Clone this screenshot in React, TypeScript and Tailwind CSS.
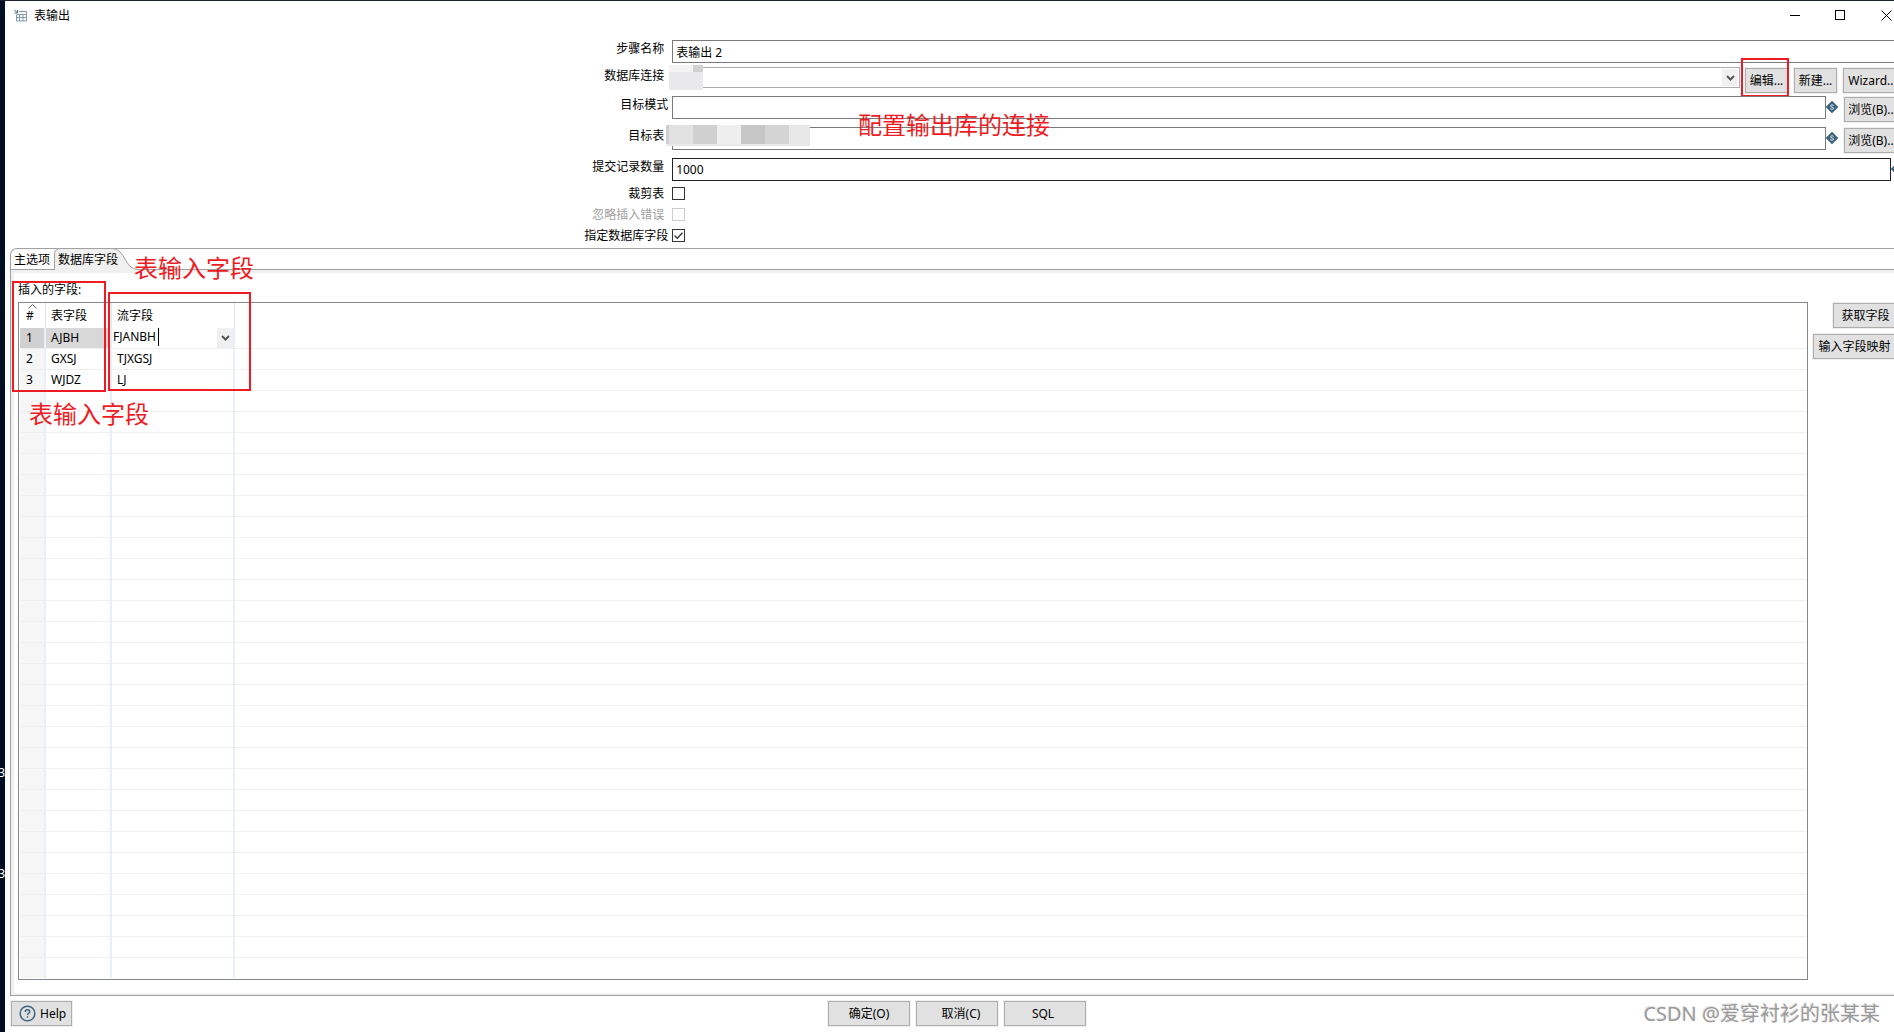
import type { ReactNode } from "react";

interface FieldRow {
  table: string;
  stream: string;
}

const fields: FieldRow[] = [
  { table: "AJBH", stream: "FJANBH" },
  { table: "GXSJ", stream: "TJXGSJ" },
  { table: "WJDZ", stream: "LJ" }
];

const EMPTY_ROWS = 28;

const pushButton =
  "h-[25px] shrink-0 whitespace-nowrap border border-[#adadad] bg-[#e1e1e1] text-center leading-[23px] outline outline-1 outline-[#f0f0f0]";
const textInput = "h-[23px] min-w-0 flex-1 border border-[#7a7a7a] bg-white px-[3px] outline-none";

export default function App() {
  return (
    <div className="relative flex min-h-screen w-full overflow-hidden border-t border-[#1b2230] bg-white font-['Noto_Sans','Noto_Sans_CJK_SC',sans-serif] text-xs text-black">
      <DesktopEdge />
      <main className="flex min-w-0 flex-1 flex-col">
        <TitleBar />
        <StepForm />
        <TabFolder />
        <Footer />
      </main>

      <Note className="left-[858px] top-[106px]">配置输出库的连接</Note>
      <Note className="left-[134px] top-[249px]">表输入字段</Note>
      <Note className="left-[29px] top-[395px]">表输入字段</Note>
      <div className="pointer-events-none absolute left-3 top-[280px] h-[111px] w-[94px] border-2 border-[#ed1c24]" />
      <div className="pointer-events-none absolute left-[108px] top-[291px] h-[99px] w-[143px] border-2 border-[#ed1c24]" />
      <div className="pointer-events-none absolute bottom-[3px] right-[14px] whitespace-nowrap text-xl leading-[30px] text-[#9a9a9a] [text-shadow:-1px_-1px_0_#e4e4e4]">
        CSDN @爱穿衬衫的张某某
      </div>
    </div>
  );
}

function DesktopEdge() {
  return (
    <div className="relative w-[5px] shrink-0 overflow-hidden bg-[#000f24] text-white">
      <span className="absolute right-0 top-[764px] leading-4">3</span>
      <span className="absolute right-0 top-[865px] leading-4">3</span>
    </div>
  );
}

function Note({ className, children }: { className: string; children: ReactNode }) {
  return (
    <div
      className={`pointer-events-none absolute whitespace-nowrap text-2xl leading-9 text-[#ed1c24] ${className}`}
    >
      {children}
    </div>
  );
}

function TitleBar() {
  return (
    <header className="flex h-[29px] items-center pl-[9px]">
      <svg width="13" height="13" viewBox="0 0 13 13" fill="none" stroke="#7f9bb0" className="mr-[7px]">
        <path d="M5 2.5h7.500v9.500h-10v-6M2.500 5.500h10M2.500 8.500h10M5.500 5v7M9 5v7" />
        <path d="M0 .5l3 3M3.500 1v3h-3" stroke="#47677f" />
      </svg>
      <h1 className="flex-1">表输出</h1>
      <button type="button" aria-label="最小化" className="mr-[34px]">
        <svg width="11" height="11" stroke="#000">
          <path d="M0 5.500h10" />
        </svg>
      </button>
      <button type="button" aria-label="最大化" className="mr-[35px]">
        <svg width="11" height="11" fill="none" stroke="#000">
          <rect x=".5" y=".5" width="9" height="9" />
        </svg>
      </button>
      <button type="button" aria-label="关闭" className="mr-[2px]">
        <svg width="11" height="11" stroke="#000">
          <path d="M.5 .5l10 10M10.500 .5l-10 10" />
        </svg>
      </button>
    </header>
  );
}

function FormRow({
  id,
  label,
  height,
  wide,
  check,
  disabled,
  children
}: {
  id: string;
  label: string;
  height: string;
  wide?: boolean;
  check?: boolean;
  disabled?: boolean;
  children: ReactNode;
}) {
  return (
    <div className={`flex items-start gap-1 ${height}`}>
      <label
        htmlFor={id}
        className={[
          "w-[calc(35%+2px)] shrink-0 text-right",
          check ? "leading-[14px]" : "leading-[18px]",
          wide ? "" : "pr-1",
          disabled ? "text-[#a0a0a0]" : ""
        ].join(" ")}
      >
        {label}
      </label>
      <div className="relative flex min-w-0 flex-1 items-start">{children}</div>
    </div>
  );
}

function StepForm() {
  return (
    <form className="pt-[10px]">
      <FormRow id="step" label="步骤名称" height="h-[27px]">
        <input id="step" className={`${textInput} border-r-0`} defaultValue="表输出 2" />
      </FormRow>

      <FormRow id="connection" label="数据库连接" height="h-[29px]">
        <div className="relative min-w-0 flex-1">
          <select
            id="connection"
            className="block h-[21px] w-full appearance-none border border-[#adadad] bg-white outline-none"
          />
          <span className="pointer-events-none absolute right-[2px] top-[2px] flex h-[17px] w-4 items-center justify-center bg-[#f0f0f0]">
            <Chevron />
          </span>
        </div>
        <Mosaic small />
        <div className="flex w-[154px] shrink-0 gap-[6px] pl-[5px] pt-px">
          <div className="relative">
            <button type="button" className={`${pushButton} w-[43px]`}>
              编辑...
            </button>
            <span className="pointer-events-none absolute -left-1 -top-[10px] h-[39px] w-12 border-2 border-[#ed1c24]" />
          </div>
          <button type="button" className={`${pushButton} w-[43px]`}>
            新建...
          </button>
          <button type="button" className={`${pushButton} w-[59px]`}>
            Wizard...
          </button>
        </div>
      </FormRow>

      <FormRow id="schema" label="目标模式" height="h-[31px]" wide>
        <input id="schema" className={textInput} />
        <BrowseTools />
      </FormRow>

      <FormRow id="target" label="目标表" height="h-[31px]">
        <input id="target" className={textInput} />
        <Mosaic />
        <BrowseTools />
      </FormRow>

      <FormRow id="commit" label="提交记录数量" height="h-[29px]">
        <input id="commit" className={`${textInput} border-[#222222]`} defaultValue="1000" />
        <div className="w-[3px] shrink-0 overflow-hidden pt-[5px]">
          <VariableIcon />
        </div>
      </FormRow>

      <FormRow id="truncate" label="裁剪表" height="h-[21px]" check>
        <CheckBox id="truncate" />
      </FormRow>
      <FormRow id="ignore" label="忽略插入错误" height="h-[21px]" check disabled>
        <CheckBox id="ignore" disabled />
      </FormRow>
      <FormRow id="specify" label="指定数据库字段" height="h-[19px]" check wide>
        <CheckBox id="specify" checked />
      </FormRow>
    </form>
  );
}

function BrowseTools() {
  return (
    <div className="flex w-[68px] shrink-0 items-start pt-px">
      <div className="mr-[6px] pt-1">
        <VariableIcon />
      </div>
      <button type="button" className={`${pushButton} w-[57px]`}>
        浏览(B)...
      </button>
    </div>
  );
}

function CheckBox({ id, checked, disabled }: { id: string; checked?: boolean; disabled?: boolean }) {
  return (
    <span className="relative h-[13px] w-[13px]">
      <input
        id={id}
        type="checkbox"
        defaultChecked={checked}
        disabled={disabled}
        className="block h-[13px] w-[13px] appearance-none border border-[#333333] bg-white disabled:border-[#cccccc]"
      />
      {checked && (
        <svg
          width="13"
          height="13"
          fill="none"
          stroke="#333"
          strokeWidth="1.300"
          className="pointer-events-none absolute inset-0"
        >
          <path d="M2.500 6.500l2.800 2.800 5.200-5.500" />
        </svg>
      )}
    </span>
  );
}

// blurred-out values
function Mosaic({ small }: { small?: boolean }) {
  if (small) {
    return (
      <div className="pointer-events-none absolute -left-[3px] -top-[2px] h-[25px] w-[34px] bg-[#e9e9eb]">
        <div className="flex h-[7px] bg-[#f3f3f3]">
          <div className="ml-auto w-[10px] bg-[#d0d0d0]" />
        </div>
      </div>
    );
  }
  return (
    <div className="pointer-events-none absolute -left-[6px] -top-[2px] flex h-[21px] w-36 border-b-2 border-[#e9e9e9]">
      <div className="w-[3px] bg-[#cfcfcf]" />
      <div className="w-6 bg-[#e1e1e1]" />
      <div className="w-6 bg-[#d0d0d0]" />
      <div className="w-6 bg-[#eeeeee]" />
      <div className="w-6 bg-[#c6c6c6]" />
      <div className="w-6 bg-[#d4d4d4]" />
      <div className="flex-1 bg-[#e8e8e8]" />
    </div>
  );
}

function VariableIcon() {
  return (
    <svg width="12" height="12" viewBox="0 0 12 12" fill="none" className="block shrink-0">
      <path d="M6 0l6 6-6 6-6-6z" fill="#3d6480" stroke="#3d6480" strokeWidth=".6" />
      <path
        d="M7.600 4.500C7.100 3.500 4.500 3.500 4.500 4.900 4.500 6.300 7.600 5.800 7.600 7.200 7.600 8.600 4.800 8.500 4.300 7.500"
        stroke="#dce6ed"
      />
    </svg>
  );
}

function Chevron() {
  return (
    <svg width="9" height="6" fill="none" stroke="#555" strokeWidth="2">
      <path d="M1 1l3.500 3.500L8 1" />
    </svg>
  );
}

function TabFolder() {
  return (
    <section className="flex flex-1 flex-col pl-[5px]">
      <div role="tablist" className="flex h-[21px] rounded-tl-[7px] border-l border-t border-[#a0a0a0]">
        <button type="button" role="tab" aria-selected="false" className="w-[43px] pr-px leading-[21px]">
          主选项
        </button>
        <button type="button" role="tab" aria-selected="true" className="relative -mt-px h-[22px] w-[84px] text-left">
          <svg width="84" height="22" fill="none" className="absolute left-0 top-0">
            <path d="M.5 22V6Q1 .5 7 .5H58C72 .5 70 21.500 84 21.500V22z" fill="#f0f0f0" />
            <path d="M.5 22V6Q1 .5 7 .5H58C72 .5 70 21.500 84 21.500" stroke="#a0a0a0" />
          </svg>
          <span className="relative pl-1 leading-[23px]">数据库字段</span>
        </button>
      </div>
      <div className="flex">
        <div className="h-px w-11 bg-[#a0a0a0]" />
        <div className="h-px w-[83px] bg-[#f0f0f0]" />
        <div className="h-px flex-1 bg-[#a0a0a0]" />
      </div>
      <div className="flex flex-1 flex-col border-b border-l border-[#a0a0a0]">
        <div className="flex flex-1 flex-col border-b-2 border-l-[3px] border-t-[3px] border-[#f0f0f0] pb-[13px] pl-1 pt-[9px]">
          <p className="mb-1 leading-4">插入的字段:</p>
          <div className="flex flex-1 items-stretch">
            <FieldTable />
            <div className="flex w-[86px] shrink-0 flex-col gap-[6px] overflow-hidden pl-[5px] pt-px">
              <button type="button" className={`${pushButton} ml-5 w-[65px]`}>
                获取字段
              </button>
              <button type="button" className={`${pushButton} w-[83px]`}>
                输入字段映射
              </button>
            </div>
          </div>
        </div>
      </div>
    </section>
  );
}

function FieldTable() {
  const line = "border-b border-[#efefef]";
  const column = "border-r-2 border-r-[#e9eff8]";
  return (
    <div className="min-w-0 flex-1 border border-[#828790] px-px">
      <table className="w-full table-fixed border-separate border-spacing-0 text-left">
        <colgroup>
          <col className="w-[26px]" />
          <col className="w-[66px]" />
          <col className="w-[123px]" />
          <col />
        </colgroup>
        <thead>
          <tr className="h-[25px]">
            <th className="relative border-r border-[#e5e5e5] p-0 pl-[6px] font-normal">
              <svg width="9" height="5" fill="none" stroke="#666" className="absolute left-2 top-px">
                <path d="M.5 4.500l4-4 4 4" />
              </svg>
              #
            </th>
            <th className="border-r border-[#e5e5e5] p-0 pl-[5px] font-normal">表字段</th>
            <th className="border-r border-[#e5e5e5] p-0 pl-[5px] font-normal">流字段</th>
            <th className="p-0" />
          </tr>
        </thead>
        <tbody>
          {fields.map((row, index) => {
            const selected = index === 0;
            return (
              <tr key={row.table}>
                <td
                  className={[
                    "h-[21px] p-0 pl-[6px] leading-5",
                    line,
                    column,
                    selected ? "bg-[#d0d0d0]" : "bg-[#f6f6f6]"
                  ].join(" ")}
                >
                  {index + 1}
                </td>
                <td className={["p-0 pl-[5px] leading-5", line, column, selected ? "bg-[#d8d8d8]" : ""].join(" ")}>
                  {row.table}
                </td>
                <td className={["p-0 leading-5", line, column, selected ? "" : "pl-[5px]"].join(" ")}>
                  {selected ? <CellEditor value={row.stream} /> : row.stream}
                </td>
                <td className={`p-0 ${line}`} />
              </tr>
            );
          })}
          {Array.from({ length: EMPTY_ROWS }, (_, index) => (
            <tr key={index} className="group">
              <td
                className={`h-[21px] bg-[#f6f6f6] p-0 group-last:h-5 group-last:border-b-0 ${line} ${column}`}
              />
              <td className={`p-0 group-last:border-b-0 ${line} ${column}`} />
              <td className={`p-0 group-last:border-b-0 ${line} ${column}`} />
              <td className={`p-0 group-last:border-b-0 ${line}`} />
            </tr>
          ))}
        </tbody>
      </table>
    </div>
  );
}

function CellEditor({ value }: { value: string }) {
  return (
    <div className="flex h-5 items-start pl-px">
      <input
        aria-label="流字段"
        defaultValue={value}
        className="h-[18px] w-[46px] border-r border-black bg-white p-0 outline-none"
      />
      <button
        type="button"
        aria-label="展开"
        className="ml-auto flex h-5 w-4 items-center justify-center bg-[#f0f0f0]"
      >
        <Chevron />
      </button>
    </div>
  );
}

function Footer() {
  return (
    <footer className="grid grid-cols-[1fr_auto_1fr] pb-[6px] pl-[6px] pt-[5px]">
      <button type="button" className={`${pushButton} flex w-[61px] items-center gap-1 pl-[7px]`}>
        <svg width="17" height="17" fill="none" stroke="#3d6480" strokeWidth="1.500">
          <circle cx="8.500" cy="8.500" r="7.300" />
          <path d="M6.300 6.900C6.300 4 10.700 4.200 10.700 6.700c0 1.500-2.200 1.600-2.200 3.200M8.500 11.200v1.600" />
        </svg>
        Help
      </button>
      <div className="ml-[9px] flex gap-[6px]">
        <button type="button" className={`${pushButton} w-[82px]`}>
          确定(O)
        </button>
        <button type="button" className={`${pushButton} w-[82px] pl-2`}>
          取消(C)
        </button>
        <button type="button" className={`${pushButton} w-[82px] pr-1`}>
          SQL
        </button>
      </div>
    </footer>
  );
}
